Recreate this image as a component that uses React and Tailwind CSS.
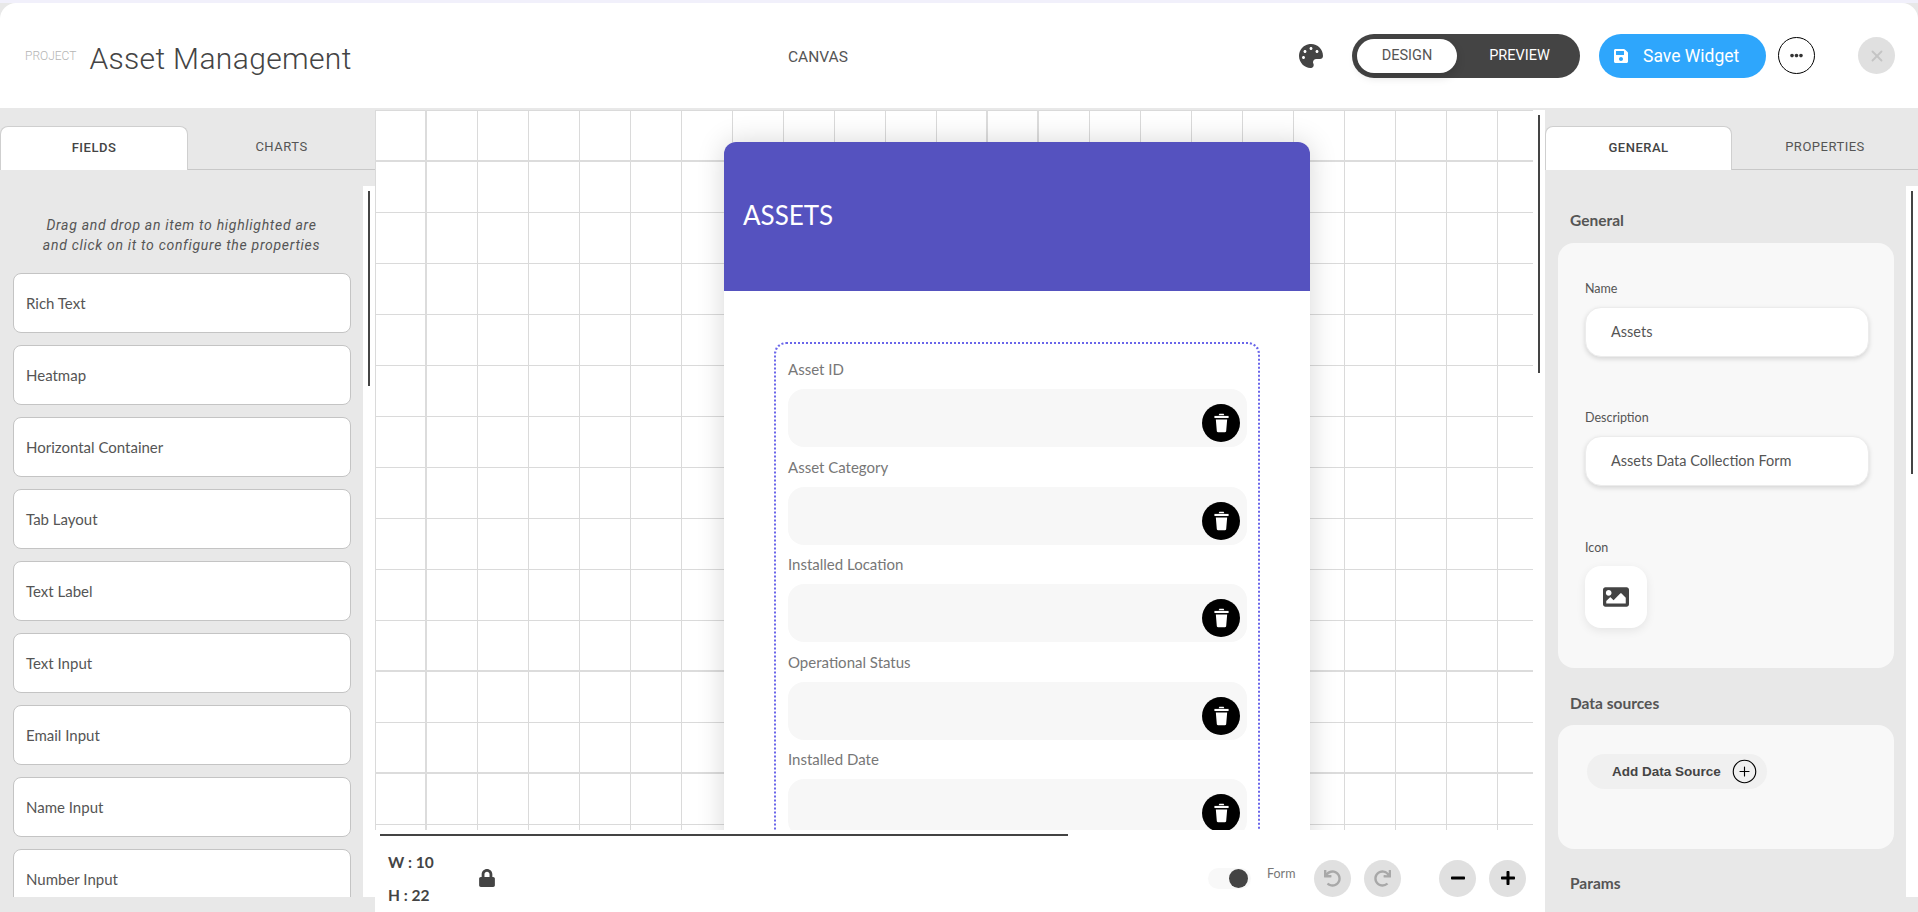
import React from 'react';
import { FaPalette, FaSave, FaEllipsisH, FaImage, FaLock, FaUndo, FaRedo, FaMinus, FaPlus } from 'react-icons/fa';
import { CirclePlus, X } from 'lucide-react';

const din = "font-['Roboto',sans-serif]";
const nunito = "font-['Lato',sans-serif]";
const round = "font-['Lato',sans-serif]";

const fieldItems = ['Rich Text', 'Heatmap', 'Horizontal Container', 'Tab Layout', 'Text Label', 'Text Input', 'Email Input', 'Name Input', 'Number Input'];
const formFields = ['Asset ID', 'Asset Category', 'Installed Location', 'Operational Status', 'Installed Date'];

// tabs shared by both side panels
const PanelTabs = ({ left, right, activeWidth }) => (
  <div className={`flex h-[44px] border-b border-[#c8c8c8] ${din}`}>
    <div className={`${activeWidth} h-[44px] pb-[2px] flex items-center justify-center bg-white border border-[#cfcfcf] border-b-0 rounded-t-lg text-[13px] font-medium tracking-[0.5px] text-[#444]`}>
      {left}
    </div>
    <div className="flex-1 pb-[2px] flex items-center justify-center text-[13px] tracking-[0.5px] text-[#555]">{right}</div>
  </div>
);

const Scrollbar = ({ thumb }) => (
  <div className="w-[12px] bg-white shrink-0 pt-[5px] pl-[5px]">
    <div className={`w-[2px] bg-[#444] ${thumb}`}></div>
  </div>
);

const TextField = ({ label, value, className }) => (
  <div className={className}>
    <div className="text-[12.5px] leading-[16px] text-[#555] pl-[27px]">{label}</div>
    <div className="ml-[27px] mt-[10px] w-[284px] h-[50px] flex items-center pl-[25px] bg-white border border-[#ececec] rounded-2xl shadow-[0_2px_5px_rgba(0,0,0,0.14)] text-[14.5px] text-[#555]">
      {value}
    </div>
  </div>
);

const RoundButton = ({ children, className = '' }) => (
  <button className={`w-[37px] h-[37px] rounded-full bg-[#e0e0e0] flex items-center justify-center ${className}`}>{children}</button>
);

const TrashIcon = () => (
  <svg viewBox="0 0 24 28" className="w-[17px] h-[20px] fill-white">
    <path d="M9 1h6l1 2H8z" />
    <path d="M2 4h20v3H2z" />
    <path d="M4 9h16l-1.4 16.5a2 2 0 0 1-2 1.5H7.4a2 2 0 0 1-2-1.5z" />
  </svg>
);

const App = () => {
  return (
    <div className={`h-[912px] w-full overflow-hidden bg-[#e8e8e8] flex flex-col ${nunito}`}>
      <div className="h-[3px] bg-[#f1f0fb] shrink-0"></div>

      {/* top bar */}
      <header className={`h-[107px] shrink-0 bg-white rounded-t-2xl border-b-2 border-[#e8e8e8] flex items-center relative ${din}`}>
        <span className="ml-[25px] text-[12px] text-[#b4b4b4] font-light">PROJECT</span>
        <span className="ml-[13px] mt-[5px] text-[30px] font-light text-[#444] tracking-[0.35px]">Asset Management</span>
        <span className="absolute left-[788px] top-[43px] text-[15.5px] text-[#555]">CANVAS</span>
        <div className="ml-auto flex items-center">
          <FaPalette className="text-[#444] w-[24px] h-[24px] mr-[29px]" />
          <div className="w-[228px] h-[44px] rounded-full bg-[#444] flex items-center pl-[5px] text-[14.5px]">
            <div className="w-[100px] h-[34px] rounded-full bg-white text-[#555] flex items-center justify-center shadow-[0_4px_10px_rgba(0,0,0,0.15)]">DESIGN</div>
            <div className="flex-1 text-white text-center pl-[2px]">PREVIEW</div>
          </div>
          <button className="ml-[19px] w-[167px] h-[44px] rounded-full bg-[#2ea6fc] text-white flex items-center pl-[14px] text-[17.5px]">
            <FaSave className="w-[16px] h-[16px] mr-[14px]" />
            <span className="mt-[2px]">Save Widget</span>
          </button>
          <button className="ml-[12px] w-[37px] h-[37px] rounded-full border border-black flex items-center justify-center">
            <FaEllipsisH className="w-[13px] h-[13px] text-[#333]" />
          </button>
          <RoundButton className="ml-[43px] mr-[23px]">
            <X className="w-[18px] h-[18px] text-[#c4c4c4]" strokeWidth={2.5} />
          </RoundButton>
        </div>
      </header>

      <div className="flex-1 flex min-h-0">
        {/* left panel */}
        <aside className="w-[375px] shrink-0 flex flex-col pt-[16px]">
          <PanelTabs left="FIELDS" right="CHARTS" activeWidth="w-[188px]" />
          <div className="flex-1 min-h-0 flex overflow-hidden pt-[16px]">
            <div className="flex-1 overflow-hidden">
              <p className={`italic text-[14px] leading-[20px] tracking-[0.7px] text-[#555] text-center pt-[29px] whitespace-nowrap ${din}`}>
                Drag and drop an item to highlighted are
                <br />
                and click on it to configure the properties
              </p>
              <div className="px-[13px] pt-[18px] pr-[12px] flex flex-col gap-[12px]">
                {fieldItems.map((item) => (
                  <div key={item} className="h-[60px] shrink-0 flex items-center pl-[12px] bg-white border border-[#c4c4c4] rounded-lg text-[15px] text-[#555]">
                    {item}
                  </div>
                ))}
              </div>
            </div>
            <Scrollbar thumb="h-[195px]" />
          </div>
          <div className="h-[15px] shrink-0 bg-[#e8e8e8]"></div>
        </aside>

        {/* canvas column */}
        <main className="w-[1170px] shrink-0 flex flex-col bg-white">
          <div className="flex-1 min-h-0 flex">
            <div className="flex-1 overflow-hidden pt-[32px] pl-[349px] [background:linear-gradient(#dcdcdc,#dcdcdc)_50px_0/2px_100%_no-repeat,linear-gradient(#dcdcdc,#dcdcdc)_611px_0/2px_100%_no-repeat,linear-gradient(#dcdcdc,#dcdcdc)_662px_0/2px_100%_no-repeat,linear-gradient(#dcdcdc,#dcdcdc)_0_50px/100%_2px_no-repeat,linear-gradient(#dcdcdc,#dcdcdc)_0_560px/100%_2px_no-repeat,linear-gradient(#dcdcdc,#dcdcdc)_0_662px/100%_2px_no-repeat,linear-gradient(to_right,#dadada_1px,transparent_1px)_0_0/51px_51px,linear-gradient(to_bottom,#dadada_1px,transparent_1px)_0_0/51px_51px,#ffffff]">
              <div className="w-[586px] min-h-[800px] bg-white rounded-t-xl shadow-[0_0_28px_rgba(0,0,0,0.16)]">
                <div className="h-[149px] bg-[#5552bf] rounded-t-xl flex items-center pl-[19px] pb-[3px] text-white text-[26px]">ASSETS</div>
                <div className={`mt-[51px] ml-[50px] w-[486px] h-[600px] border-2 border-dotted border-[#6a66ea] rounded-xl pt-[15px] pl-[12px] ${round}`}>
                  {formFields.map((label) => (
                    <div key={label} className="h-[97.6px]">
                      <div className="h-[20px] leading-[20px] text-[15px] text-[#777]">{label}</div>
                      <div className="relative mt-[10px] w-[459px] h-[58px] rounded-2xl bg-[#f7f7f7]">
                        <div className="absolute right-[7px] top-[15px] w-[38px] h-[38px] rounded-full bg-black flex items-center justify-center">
                          <TrashIcon />
                        </div>
                      </div>
                    </div>
                  ))}
                </div>
              </div>
            </div>
            <Scrollbar thumb="h-[258px]" />
          </div>

          {/* bottom tool bar */}
          <div className={`h-[82px] shrink-0 bg-white ${round}`}>
            <div className="h-[2px] w-[688px] ml-[5px] mt-[4px] bg-[#444]"></div>
            <div className="flex items-center h-[76px] pt-[8px] pl-[13px]">
              <div className="w-[91px] flex flex-col gap-[13px] text-[15.5px] leading-[20px] font-bold text-[#444]">
                <span>W : 10</span>
                <span>H : 22</span>
              </div>
              <FaLock className="w-[16px] h-[18px] text-[#444]" />
              <div className="ml-auto flex items-center pr-[19px]">
                <div className="w-[43px] h-[21px] rounded-full bg-[#f8f8f8] flex items-center justify-end pr-[3px]">
                  <div className="w-[19px] h-[19px] rounded-full bg-[#444]"></div>
                </div>
                <span className="ml-[16px] w-[47px] text-[12.5px] text-[#777] -mt-[8px]">Form</span>
                <RoundButton><FaUndo className="w-[17px] h-[17px] text-[#a8a8a8]" /></RoundButton>
                <RoundButton className="ml-[13px]"><FaRedo className="w-[17px] h-[17px] text-[#a8a8a8]" /></RoundButton>
                <RoundButton className="ml-[38px]"><FaMinus className="w-[16px] h-[16px] text-black" /></RoundButton>
                <RoundButton className="ml-[13px]"><FaPlus className="w-[16px] h-[16px] text-black" /></RoundButton>
              </div>
            </div>
          </div>
        </main>

        {/* right panel */}
        <aside className="flex-1 min-w-0 flex flex-col pt-[16px]">
          <PanelTabs left="GENERAL" right="PROPERTIES" activeWidth="w-[187px]" />
          <div className="flex-1 min-h-0 flex overflow-hidden pt-[16px]">
            <div className="flex-1 overflow-hidden pl-[13px] pr-[12px]">
              <h3 className="pl-[12px] pt-[24px] text-[15.5px] leading-[20px] font-bold text-[#555]">General</h3>
              <div className="mt-[13px] h-[425px] rounded-2xl bg-[#f8f8f8] pt-[38px]">
                <TextField label="Name" value="Assets" />
                <TextField label="Description" value="Assets Data Collection Form" className="mt-[53px]" />
                <div className="mt-[54px] pl-[27px] text-[12.5px] leading-[16px] text-[#555]">Icon</div>
                <div className="ml-[27px] mt-[10px] w-[62px] h-[62px] rounded-2xl bg-white shadow-[0_3px_10px_rgba(0,0,0,0.08)] flex items-center justify-center">
                  <FaImage className="w-[26px] h-[26px] text-[#444]" />
                </div>
              </div>
              <h3 className="pl-[12px] mt-[25px] text-[15.5px] leading-[20px] font-bold text-[#555]">Data sources</h3>
              <div className="mt-[12px] h-[124px] rounded-2xl bg-[#f8f8f8] pt-[29px] pl-[29px]">
                <button className="w-[180px] h-[35px] rounded-full bg-[#f0f0f0] flex items-center pl-[25px] font-['Liberation_Sans',sans-serif] text-[13.5px] font-bold text-[#444] whitespace-nowrap">
                  <span className="mt-[1px]">Add Data Source</span>
                  <CirclePlus className="ml-[10px] w-[27px] h-[27px] text-black shrink-0" strokeWidth={1} />
                </button>
              </div>
              <h3 className="pl-[12px] mt-[24px] text-[15.5px] leading-[20px] font-bold text-[#555]">Params</h3>
            </div>
            <Scrollbar thumb="h-[283px]" />
          </div>
          <div className="h-[15px] shrink-0 bg-[#e8e8e8]"></div>
        </aside>
      </div>
    </div>
  );
};

export default App;
